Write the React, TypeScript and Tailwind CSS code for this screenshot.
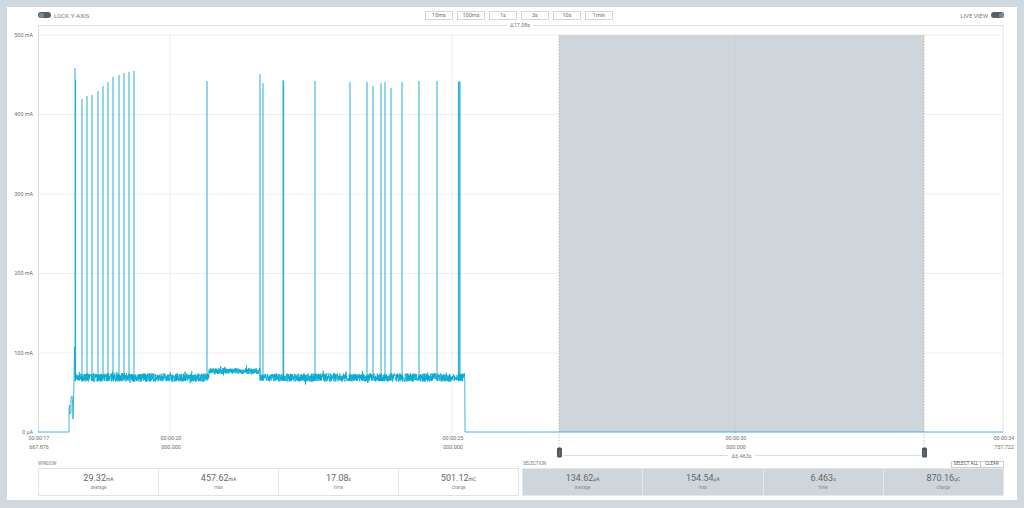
import React from "react";

const TRACE = "#0aa8cf";
const FONT = { fontFamily: "Roboto, 'Liberation Sans', sans-serif" };

function rng(seed: number) {
  let s = seed >>> 0;
  return () => {
    s = (s + 0x6d2b79f5) >>> 0;
    let t = s;
    t = Math.imul(t ^ (t >>> 15), t | 1);
    t ^= t + Math.imul(t ^ (t >>> 7), t | 61);
    return ((t ^ (t >>> 14)) >>> 0) / 4294967296;
  };
}

// x position on page, y of spike top
const SPIKES: [number, number][] = [
  [75, 68], [75.6, 80], [82, 99], [87, 96], [92, 95], [98, 91], [103, 86],
  [108, 82], [113, 77], [119, 75], [124, 73], [129, 72], [134, 71],
  [207, 81], [260, 74], [263, 83], [283, 80], [283.7, 81], [315, 81],
  [350, 82], [367, 82], [373, 86], [381, 83], [385, 82], [391, 88],
  [402, 82], [419, 81], [437, 81], [458.4, 82], [459.2, 81], [460, 82],
];

function buildTrace() {
  const r = rng(11);
  const parts: string[] = [
    "M38 432 L69 432 L69 410 L69.6 405 L70 414 L71 412 L71 398 L72 396 L72.5 401 L73 419 L73.5 402 L74 381 L74.5 347 L75 374",
  ];
  for (let x = 75.3; x <= 465; x += 0.18) {
    const up = x >= 209 && x < 260;
    const c = up ? 371 : 377.5;
    let y = c + (r() - 0.5) * (up ? 6 : 8.5);
    if (r() < 0.03) y += (r() - 0.5) * 10;
    parts.push(`L${x.toFixed(2)} ${y.toFixed(1)}`);
  }
  parts.push("L465 432 L1003 432");
  return parts.join(" ");
}

const TRACE_PATH = buildTrace();

const Y_TICKS: [number, string][] = [
  [35, "500 mA"],
  [114.5, "400 mA"],
  [194, "300 mA"],
  [273.5, "200 mA"],
  [353, "100 mA"],
  [432, "0 µA"],
];

const X_TICKS: [number, string, string][] = [
  [38, "00:00:17", "667.876"],
  [170, "00:00:20", "000.000"],
  [452, "00:00:25", "000.000"],
  [735, "00:00:30", "000.000"],
  [1003, "00:00:34", "757.722"],
];

function Handle({ x }: { x: number }) {
  return (
    <g>
      <rect x={x - 2.5} y={447.5} width={5} height={10} rx={1.6} fill="#4b545b" />
      <line x1={x - 1.3} x2={x + 1.3} y1={451} y2={451} stroke="#9aa3a9" strokeWidth={0.5} />
      <line x1={x - 1.3} x2={x + 1.3} y1={453} y2={453} stroke="#9aa3a9" strokeWidth={0.5} />
      <line x1={x - 1.3} x2={x + 1.3} y1={455} y2={455} stroke="#9aa3a9" strokeWidth={0.5} />
    </g>
  );
}

function Chart() {
  return (
    <svg width={1010} height={438} viewBox="7 22 1010 438" className="block" style={FONT}>
      {/* window span */}
      <line x1={38} x2={507} y1={25.5} y2={25.5} stroke="#e4e4e4" strokeWidth={1} />
      <line x1={533} x2={1003} y1={25.5} y2={25.5} stroke="#e4e4e4" strokeWidth={1} />
      <text x={520} y={27.3} fontSize={5.4} fill="#7a7a7a" textAnchor="middle">Δ17.08s</text>

      {/* grid */}
      {Y_TICKS.slice(0, 5).map(([y]) => (
        <line key={y} x1={38} x2={1003} y1={y} y2={y} stroke="#efefef" strokeWidth={1} />
      ))}
      {[170, 452].map((x) => (
        <line key={x} x1={x} x2={x} y1={35} y2={433} stroke="#ececec" strokeWidth={1} />
      ))}

      {/* selection */}
      <rect x={559} y={35} width={365} height={397} fill="#ced6dc" />
      <line x1={735} x2={735} y1={35} y2={433} stroke="#c4cdd3" strokeWidth={1} />
      <line x1={38.5} x2={38.5} y1={25} y2={433} stroke="#dcdcdc" strokeWidth={1} />
      <line x1={1003} x2={1003} y1={25} y2={433} stroke="#e2e2e2" strokeWidth={1} />

      {/* axis labels */}
      {Y_TICKS.map(([y, t]) => (
        <text key={t} x={33} y={y + 1.9} fontSize={5.4} fill="#6e6e6e" textAnchor="end">
          {t}
        </text>
      ))}
      {X_TICKS.map(([x, a, b]) => (
        <g key={a}>
          <text x={x + 1} y={440.2} fontSize={5.4} fill="#6e6e6e" textAnchor="middle">{a}</text>
          <text x={x + 1} y={448.6} fontSize={5.4} fill="#6e6e6e" textAnchor="middle">{b}</text>
        </g>
      ))}

      {/* trace */}
      {SPIKES.map(([x, top]) => (
        <line key={x} x1={x} x2={x} y1={top} y2={381} stroke={TRACE} strokeWidth={0.9} />
      ))}
      <path d={TRACE_PATH} fill="none" stroke={TRACE} strokeWidth={0.8} strokeLinejoin="round" />

      {/* selection markers */}
      <line x1={559} x2={559} y1={35} y2={448} stroke="#98a2a8" strokeWidth={0.6} strokeDasharray="1.5 1.5" />
      <line x1={924} x2={924} y1={35} y2={448} stroke="#98a2a8" strokeWidth={0.6} strokeDasharray="1.5 1.5" />
      <line x1={563} x2={728} y1={455.5} y2={455.5} stroke="#dedede" strokeWidth={1} />
      <line x1={755} x2={921} y1={455.5} y2={455.5} stroke="#dedede" strokeWidth={1} />
      <text x={741.5} y={457.5} fontSize={5.4} fill="#7a7a7a" textAnchor="middle">Δ6.463s</text>
      <Handle x={559.5} />
      <Handle x={924.5} />
    </svg>
  );
}

function Toggle({ on }: { on?: boolean }) {
  return (
    <div className={`w-[13px] h-[6px] rounded-full bg-[#56626b] flex items-center px-[0.5px] ${on ? "justify-end" : "justify-start"}`}>
      <div className="w-[5px] h-[5px] rounded-full bg-[#7d8991]" />
    </div>
  );
}

const RANGES = ["10ms", "100ms", "1s", "3s", "10s", "1min"];

function Stat({ value, unit, label, sel }: { value: string; unit: string; label: string; sel?: boolean }) {
  return (
    <div
      className={`flex-1 flex flex-col items-center justify-center border-r last:border-r-0 ${
        sel ? "border-[#e3e8eb]" : "border-[#e6e6e6]"
      }`}
    >
      <div className="text-[9px] leading-none text-[#666]">
        {value}
        <span className="text-[5px]">{unit}</span>
      </div>
      <div className="text-[4.5px] leading-none text-[#8a8a8a] mt-[3px]">{label}</div>
    </div>
  );
}

export default function App() {
  return (
    <div className="w-[1024px] h-[508px] bg-[#d1d9df] pt-[7px] px-[7px] overflow-hidden" style={FONT}>
      <div className="h-[493px] bg-white flex flex-col">
        {/* top controls */}
        <div className="h-[15px] flex items-center pl-[31px] pr-[13px] pt-[1px]">
          <div className="w-[387px] flex items-center gap-[3px]">
            <Toggle />
            <span className="text-[6px] text-[#6f7a82] tracking-[0.1px]">LOCK Y-AXIS</span>
          </div>
          <div className="flex gap-[4px]">
            {RANGES.map((r) => (
              <div
                key={r}
                className="w-[28px] h-[9px] border border-[#d6d6d6] flex items-center justify-center text-[5.5px] text-[#6e6e6e]"
              >
                {r}
              </div>
            ))}
          </div>
          <div className="flex-1 flex items-center justify-end gap-[3px]">
            <span className="text-[6px] text-[#6f7a82]">LIVE VIEW</span>
            <Toggle on />
          </div>
        </div>

        <Chart />

        {/* stats */}
        <div className="flex gap-[3px] pl-[31px] pr-[13px]">
          <div className="w-[481px] flex flex-col">
            <div className="h-[8px] flex items-center text-[4.5px] text-[#7c7c7c]">WINDOW</div>
            <div className="h-[28px] border border-[#e2e2e2] flex">
              <Stat value="29.32" unit="mA" label="average" />
              <Stat value="457.62" unit="mA" label="max" />
              <Stat value="17.08" unit="s" label="time" />
              <Stat value="501.12" unit="mC" label="charge" />
            </div>
          </div>
          <div className="w-[482px] flex flex-col">
            <div className="h-[8px] flex items-center justify-between">
              <span className="text-[4.5px] text-[#7c7c7c] pl-[1px]">SELECTION</span>
              <div className="flex h-[7px] border border-[#cfcfcf] text-[4.5px] text-[#555]">
                <div className="w-[29px] flex items-center justify-center border-r border-[#cfcfcf]">SELECT ALL</div>
                <div className="w-[22px] flex items-center justify-center">CLEAR</div>
              </div>
            </div>
            <div className="h-[28px] bg-[#ced6dc] border border-[#e3e8eb] flex">
              <Stat sel value="134.62" unit="µA" label="average" />
              <Stat sel value="154.54" unit="µA" label="max" />
              <Stat sel value="6.463" unit="s" label="time" />
              <Stat sel value="870.16" unit="µC" label="charge" />
            </div>
          </div>
        </div>
      </div>
    </div>
  );
}
